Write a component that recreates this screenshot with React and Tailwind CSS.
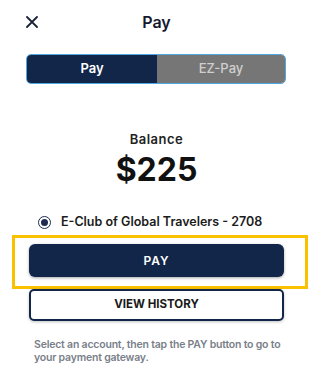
import React from "react";

export default function App() {
  return (
    <div className="w-[328px] h-[382px] bg-white" style={{ fontFamily: "Inter, 'Noto Sans', sans-serif" }}>
      <div className="w-[313px] flex flex-col">
        {/* Header */}
        <div className="relative h-[44px] flex items-center justify-center">
          <svg className="absolute left-[26px] top-[16px]" width="12" height="12" viewBox="0 0 12 12">
            <path d="M1 1 L11 11 M11 1 L1 11" stroke="#1a2238" strokeWidth="1.8" strokeLinecap="round" />
          </svg>
          <span className="text-[16px] font-semibold text-[#141a2e]">Pay</span>
        </div>
        {/* Segmented */}
        <div className="mt-[10px] ml-[26px] w-[260px] h-[30px] rounded-[5px] border-[1.5px] border-[#4fa8e0] flex overflow-hidden">
          <div className="w-[130px] bg-[#12264a] flex items-center justify-center text-white text-[13px] font-semibold">Pay</div>
          <div className="flex-1 bg-[#767676] flex items-center justify-center text-[#cfcfcf] text-[13px] font-medium">EZ-Pay</div>
        </div>
        {/* Balance */}
        <div className="mt-[46px] flex flex-col items-center">
          <span className="text-[13px] font-semibold text-[#222] tracking-[0.5px] leading-[18px]">Balance</span>
          <span className="mt-[3px] text-[32px] font-bold text-[#111] leading-[38px]">$225</span>
        </div>
        {/* Radio */}
        <div className="mt-[23px] ml-[38px] flex items-center gap-[10px] h-[20px]">
          <span className="w-[13px] h-[13px] rounded-full border-[1.5px] border-[#1d2c4f] flex items-center justify-center">
            <span className="w-[7px] h-[7px] rounded-full bg-[#1d2c4f]" />
          </span>
          <span className="text-[12.5px] font-semibold text-[#1c1c1c]">E-Club of Global Travelers - 2708</span>
        </div>
        {/* Pay button box */}
        <div className="mt-[3px] ml-[12px] w-[296px] h-[54px] border-[3px] border-[#f9c100] pt-[6px] pl-[14px]">
          <div className="w-[255px] h-[33px] rounded-[6px] bg-[#12264a] shadow-[0_1px_3px_rgba(0,0,0,0.35)] flex items-center justify-center text-white text-[12px] font-semibold tracking-[1px]">PAY</div>
        </div>
        <div className="ml-[29px] w-[255px] h-[32px] rounded-[5px] border-[2px] border-[#12264a] bg-white shadow-[0_1px_3px_rgba(0,0,0,0.25)] flex items-center justify-center text-[#1a1a1a] text-[11.5px] font-bold">VIEW HISTORY</div>
        <p className="mt-[17px] ml-[34px] text-[10.5px] tracking-[-0.2px] leading-[13px] font-semibold text-[#7a7f8a] whitespace-nowrap">
          Select an account, then tap the PAY button to go to<br />your payment gateway.
        </p>
      </div>
    </div>
  );
}
